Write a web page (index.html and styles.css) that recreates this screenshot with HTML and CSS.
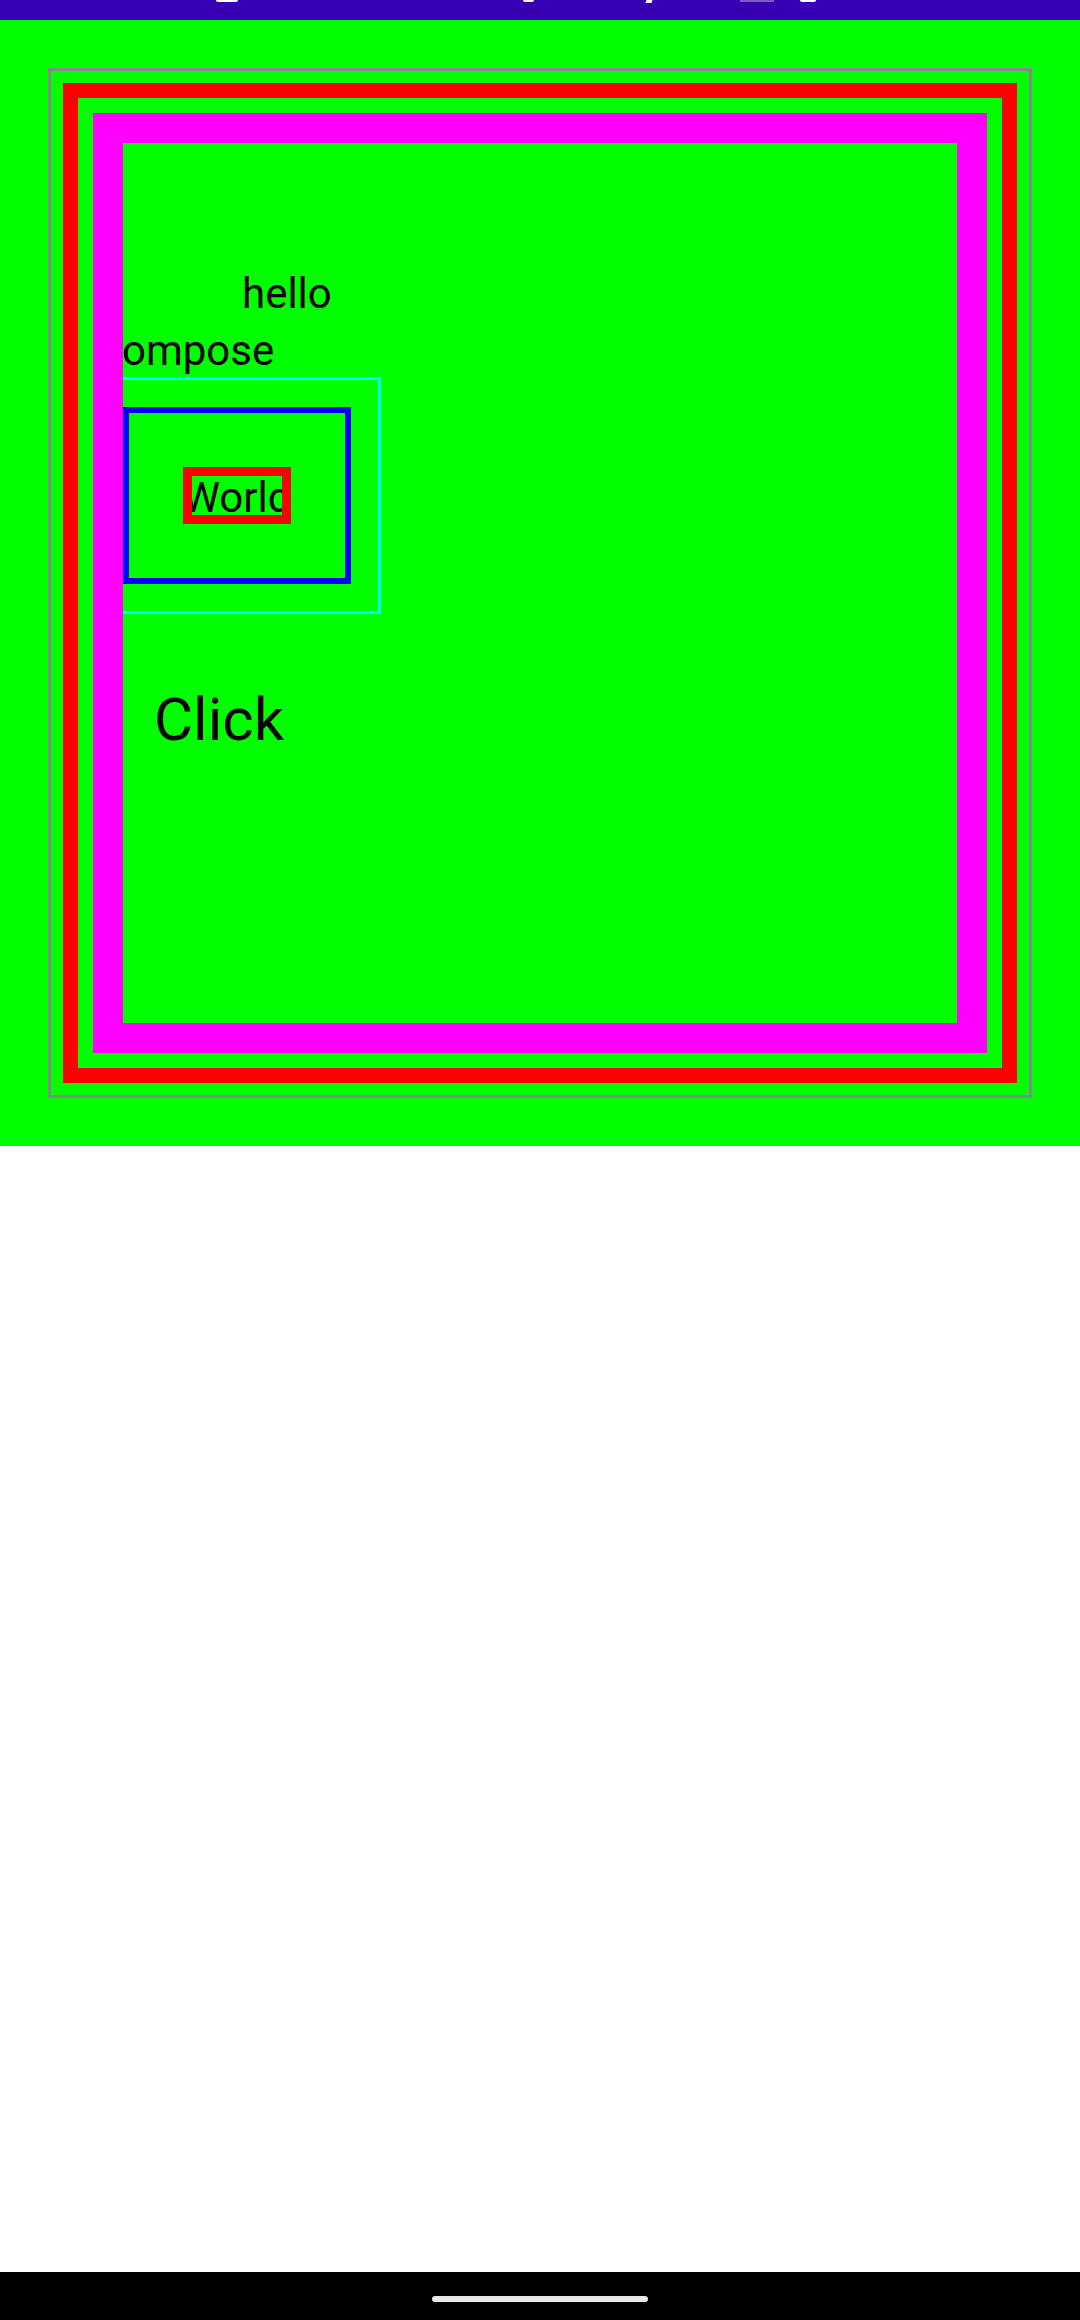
FILE: index.html
```html
<!DOCTYPE html>
<html>
<head>
<meta charset="utf-8">
<link rel="stylesheet" href="styles.css">
</head>
<body>
<div class="screen">
  <div class="status">
    <div class="sb-icon sb-a"></div>
    <span class="sb-speed">KB/s</span>
    <div class="sb-icon sb-b"></div>
    <div class="sb-icon sb-c"></div>
    <div class="sb-icon sb-d"></div>
    <div class="sb-icon sb-e"></div>
  </div>
  <div class="stage">
    <div class="frame-gray">
      <div class="frame-red">
        <div class="frame-magenta">
          <div class="txt hello">hello</div>
          <div class="txt compose">compose</div>
          <div class="box-cyan">
            <div class="box-blue">
              <div class="box-red"><span class="txt world">World</span></div>
            </div>
          </div>
          <div class="txt click">Click</div>
        </div>
      </div>
    </div>
  </div>
  <div class="filler"></div>
  <div class="navbar"><div class="handle"></div></div>
</div>
</body>
</html>
```
FILE: styles.css
```css
html, body {
  margin: 0;
  padding: 0;
  background: #ffffff;
}
.screen {
  width: 1080px;
  height: 2320px;
  display: flex;
  flex-direction: column;
  font-family: Roboto, "Noto Sans", sans-serif;
  color: #000;
}
.status {
  height: 20px;
  flex: none;
  background: #3700B3;
  overflow: hidden;
  display: flex;
  align-items: flex-start;
}
.sb-icon {
  flex: none;
  background: #ffffff;
}
.sb-a {
  width: 22px;
  height: 2px;
  margin-left: 216px;
  border-radius: 0 0 2px 2px;
}
.sb-speed {
  flex: none;
  margin-left: 31px;
  margin-top: -24px;
  font-size: 24px;
  line-height: 28px;
  font-weight: 700;
  color: #fff;
}
.sb-b {
  width: 11px;
  height: 2px;
  margin-left: 202px;
  border-radius: 0 0 6px 6px;
}
.sb-c {
  width: 6px;
  height: 3px;
  margin-left: 112px;
  transform: skewX(-20deg);
}
.sb-d {
  width: 34px;
  height: 2px;
  margin-left: 88px;
  background: rgba(255,255,255,0.35);
}
.sb-e {
  width: 16px;
  height: 2px;
  margin-left: 26px;
  border-radius: 0 0 2px 2px;
}
.stage {
  flex: none;
  background: #00FF00;
  padding: 48px;
}
.frame-gray {
  border: 3px solid #888888;
  padding: 12px;
}
.frame-red {
  box-sizing: border-box;
  height: 1000px;
  border: 15px solid #FF0000;
  padding: 15px;
}
.frame-magenta {
  box-sizing: border-box;
  height: 100%;
  border: 30px solid #FF00FF;
  overflow: hidden;
}
.txt {
  font-size: 42px;
  line-height: normal;
  white-space: nowrap;
}
.hello {
  margin-top: 126px;
  margin-left: 119px;
}
.compose {
  margin-top: 8px;
  margin-left: -23px;
}
.box-cyan {
  box-sizing: border-box;
  width: 288px;
  height: 237px;
  margin-top: 2px;
  margin-left: -30px;
  border: 3px solid #00FFFF;
  padding: 27px;
}
.box-blue {
  box-sizing: border-box;
  width: 228px;
  height: 177px;
  border: 6px solid #0000FF;
  display: flex;
  align-items: center;
  justify-content: center;
}
.box-red {
  box-sizing: border-box;
  width: 108px;
  height: 57px;
  flex: none;
  border: 9px solid #FF0000;
  overflow: hidden;
  display: flex;
  align-items: center;
  justify-content: center;
}
.world {
  flex: none;
  margin-top: 3px;
}
.click {
  font-size: 60px;
  margin-top: 70px;
  margin-left: 31px;
}
.filler {
  flex: 1;
  background: #ffffff;
}
.navbar {
  flex: none;
  height: 48px;
  background: #000;
  display: flex;
  justify-content: center;
  padding-top: 24px;
  box-sizing: border-box;
}
.handle {
  width: 216px;
  height: 6px;
  border-radius: 3px;
  background: #e8e8e8;
}
```
